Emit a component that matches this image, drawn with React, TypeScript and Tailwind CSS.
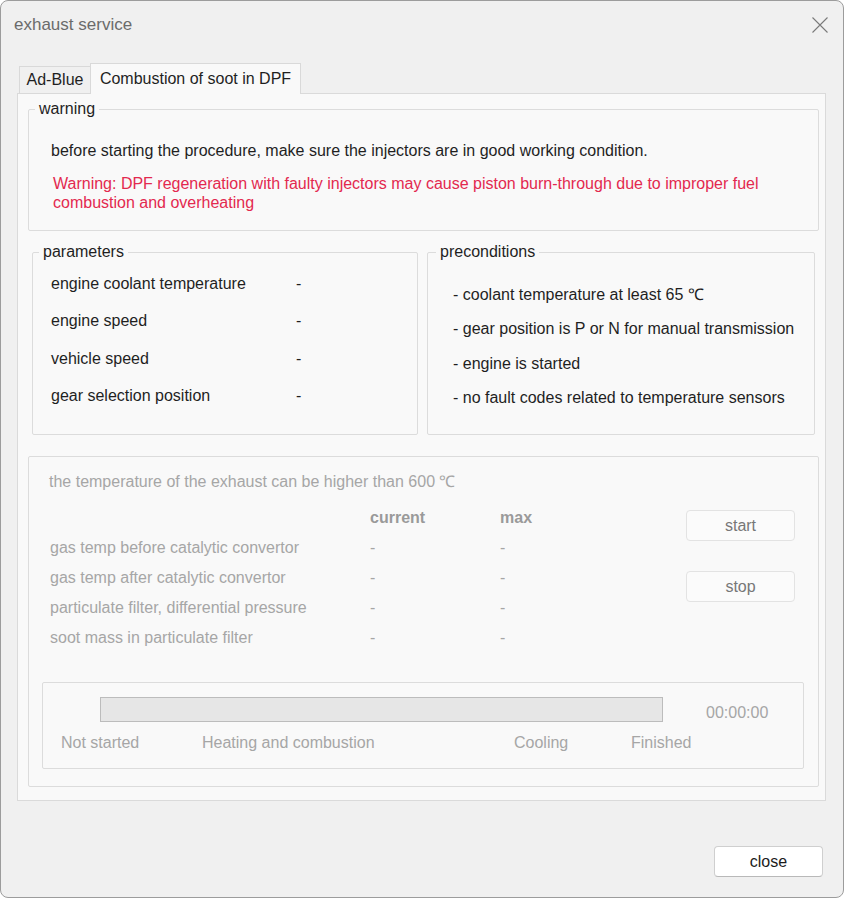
import React from "react";

function Group({
  title,
  className = "",
  legendMl = "ml-[6px]",
  children,
}: {
  title: string;
  className?: string;
  legendMl?: string;
  children: React.ReactNode;
}) {
  return (
    <fieldset className={`border border-[#dcdcdc] rounded-[2px] ${className}`}>
      <legend className={`${legendMl} px-[4px] text-[16px] leading-[20px] text-[#1f1f1f]`}>{title}</legend>
      {children}
    </fieldset>
  );
}

const params = [
  "engine coolant temperature",
  "engine speed",
  "vehicle speed",
  "gear selection position",
];

const preconds = [
  "- coolant temperature at least 65 ℃",
  "- gear position is P or N for manual transmission",
  "- engine is started",
  "- no fault codes related to temperature sensors",
];

const measures = [
  "gas temp before catalytic convertor",
  "gas temp after catalytic convertor",
  "particulate filter, differential pressure",
  "soot mass in particulate filter",
];

export default function App() {
  return (
    <div className="w-[844px] h-[898px] bg-[#f0f0f0] border border-[#9c9c9c] rounded-[8px] overflow-hidden font-['Liberation_Sans',Arial,sans-serif] text-[16px] text-[#1f1f1f]">
      {/* title bar */}
      <div className="h-[47px] flex items-center justify-between pl-[13px] pr-[15px]">
        <span className="text-[17px] leading-[20px] text-[#6b6b6b]">exhaust service</span>
        <svg width="16" height="16" viewBox="0 0 16 16" className="block">
          <path d="M0.5 0.5 L15.5 15.5 M15.5 0.5 L0.5 15.5" stroke="#7a7a7a" strokeWidth="1.1" fill="none" />
        </svg>
      </div>

      {/* tabs */}
      <div className="mt-[15px] h-[31px] -mb-px pl-[18px] flex items-end relative z-10">
        <div className="w-[72px] h-[28px] bg-[#f0f0f0] border border-[#d9d9d9] flex items-center justify-center leading-[20px]">
          Ad-Blue
        </div>
        <div className="-ml-px w-[211px] h-[31px] bg-[#f9f9f9] border-x border-t border-[#d9d9d9] flex items-center justify-center leading-[20px]">
          Combustion of soot in DPF
        </div>
      </div>

      {/* tab panel */}
      <div className="ml-[16px] w-[809px] h-[708px] bg-[#f9f9f9] border border-[#dadada] pl-[10px]">
        <Group title="warning" className="mt-[5px] w-[791px]">
          <div className="pt-[22px] pb-[18px] pl-[22px]">
            <p className="leading-[20px]">
              before starting the procedure, make sure the injectors are in good working condition.
            </p>
            <p className="mt-[13px] pl-[2px] leading-[19px] text-[#e3294f]">
              Warning: DPF regeneration with faulty injectors may cause piston burn-through due to improper fuel
              <br />
              combustion and overheating
            </p>
          </div>
        </Group>

        <div className="mt-[11px] ml-[4px] flex gap-[9px]">
          <Group title="parameters" className="w-[386px] h-[193px]">
            <div className="pt-[3px] pl-[18px]">
              {params.map((p) => (
                <div key={p} className="h-[37.5px] flex items-center leading-[20px]">
                  <span className="w-[245px]">{p}</span>
                  <span>-</span>
                </div>
              ))}
            </div>
          </Group>
          <Group title="preconditions" className="w-[388px] h-[193px]" legendMl="ml-[8px]">
            <div className="pt-[16px] pl-[25px]">
              {preconds.map((p) => (
                <div key={p} className="h-[34.3px] flex items-center leading-[20px]">
                  {p}
                </div>
              ))}
            </div>
          </Group>
        </div>

        {/* disabled area */}
        <div className="mt-[21px] w-[791px] h-[331px] border border-[#dcdcdc] rounded-[2px] text-[#a6a6a6]">
          <div className="flex">
            <div className="pl-[20px] pt-[15px]">
              <p className="leading-[20px]">the temperature of the exhaust can be higher than 600 ℃</p>
              <div className="mt-[11px] h-[30px] flex items-center font-bold text-[#9a9a9a]">
                <span className="w-[321px]" />
                <span className="w-[130px]">current</span>
                <span>max</span>
              </div>
              {measures.map((m) => (
                <div key={m} className="h-[30px] flex items-center">
                  <span className="w-[321px] pl-[1px]">{m}</span>
                  <span className="w-[130px]">-</span>
                  <span>-</span>
                </div>
              ))}
            </div>
            <div className="ml-auto mr-[23px] pt-[53px] flex flex-col gap-[30px]">
              <button className="w-[109px] h-[31px] bg-[#fbfbfb] border border-[#e3e3e3] rounded-[4px] text-[#777777] leading-[20px]">
                start
              </button>
              <button className="w-[109px] h-[31px] bg-[#fbfbfb] border border-[#e3e3e3] rounded-[4px] text-[#777777] leading-[20px]">
                stop
              </button>
            </div>
          </div>

          <div className="mt-[29px] ml-[13px] w-[762px] h-[87px] border border-[#dcdcdc] rounded-[2px]">
            <div className="pt-[14px] pl-[57px] flex items-start">
              <div className="w-[563px] h-[25px] bg-[#e6e6e6] border border-[#bcbcbc]" />
              <span className="ml-[43px] mt-[6px] leading-[20px] text-[#a6a6a6]">00:00:00</span>
            </div>
            <div className="mt-[10px] pl-[18px] flex leading-[20px] text-[#a6a6a6]">
              <span className="w-[141px]">Not started</span>
              <span className="w-[312px]">Heating and combustion</span>
              <span className="w-[117px]">Cooling</span>
              <span>Finished</span>
            </div>
          </div>
        </div>
      </div>

      {/* footer */}
      <div className="mt-[45px] flex justify-end pr-[20px]">
        <button className="w-[109px] h-[31px] bg-white border border-[#cfcfcf] border-b-[#b9b9b9] rounded-[4px] text-[#1b1b1b] leading-[20px]">
          close
        </button>
      </div>
    </div>
  );
}
